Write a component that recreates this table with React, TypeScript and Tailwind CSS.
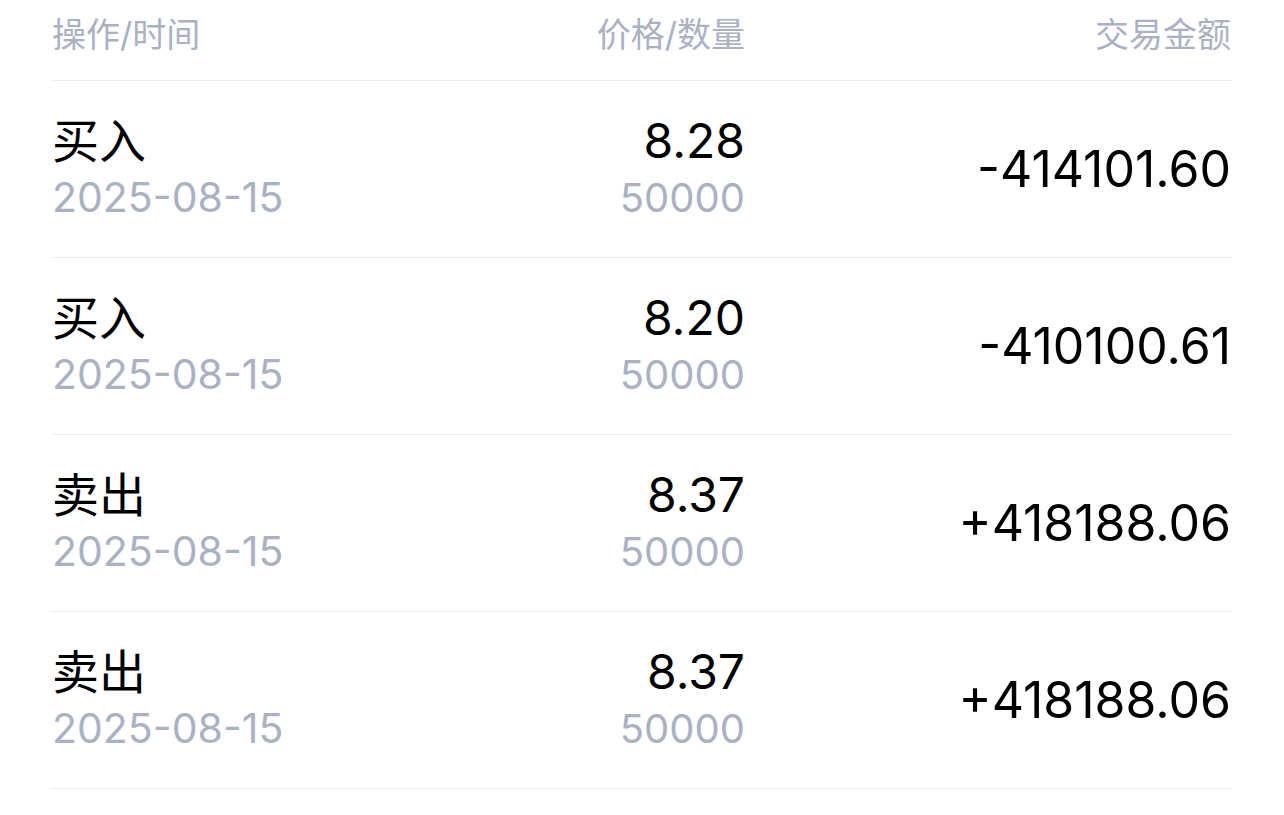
const rows = [
  { type: '买入', date: '2025-08-15', price: '8.28', qty: '50000', amount: '-414101.60' },
  { type: '买入', date: '2025-08-15', price: '8.20', qty: '50000', amount: '-410100.61' },
  { type: '卖出', date: '2025-08-15', price: '8.37', qty: '50000', amount: '+418188.06' },
  { type: '卖出', date: '2025-08-15', price: '8.37', qty: '50000', amount: '+418188.06' },
]

export default function App() {
  return (
    <div
      className="w-[1284px] h-[815px] bg-white overflow-hidden"
      style={{ fontFamily: 'Inter, "Noto Sans CJK SC", sans-serif' }}
    >
      <div className="ml-[52px] mr-[53px]">
        {/* Header */}
        <div className="grid grid-cols-[470px_223px_1fr] h-[81px] pt-[15px] border-b border-[#ececee] text-[34px] leading-[40px] text-[#abb1c5]">
          <div>操作/时间</div>
          <div className="text-right">价格/数量</div>
          <div className="text-right">交易金额</div>
        </div>

        {/* Rows */}
        {rows.map((r, idx) => (
          <div
            key={idx}
            className="grid grid-cols-[470px_223px_1fr] items-center h-[177px] border-b border-[#ececee]"
          >
            <div>
              <div className="text-[47px] leading-[57px] text-black">{r.type}</div>
              <div className="text-[41px] leading-[57px] text-[#abb1c5]">{r.date}</div>
            </div>
            <div className="text-right">
              <div className="text-[48px] leading-[57px] text-black">{r.price}</div>
              <div className="text-[40px] leading-[57px] text-[#abb1c5]">{r.qty}</div>
            </div>
            <div className="text-right text-[50px] leading-[57px] text-black">{r.amount}</div>
          </div>
        ))}
      </div>
    </div>
  )
}
